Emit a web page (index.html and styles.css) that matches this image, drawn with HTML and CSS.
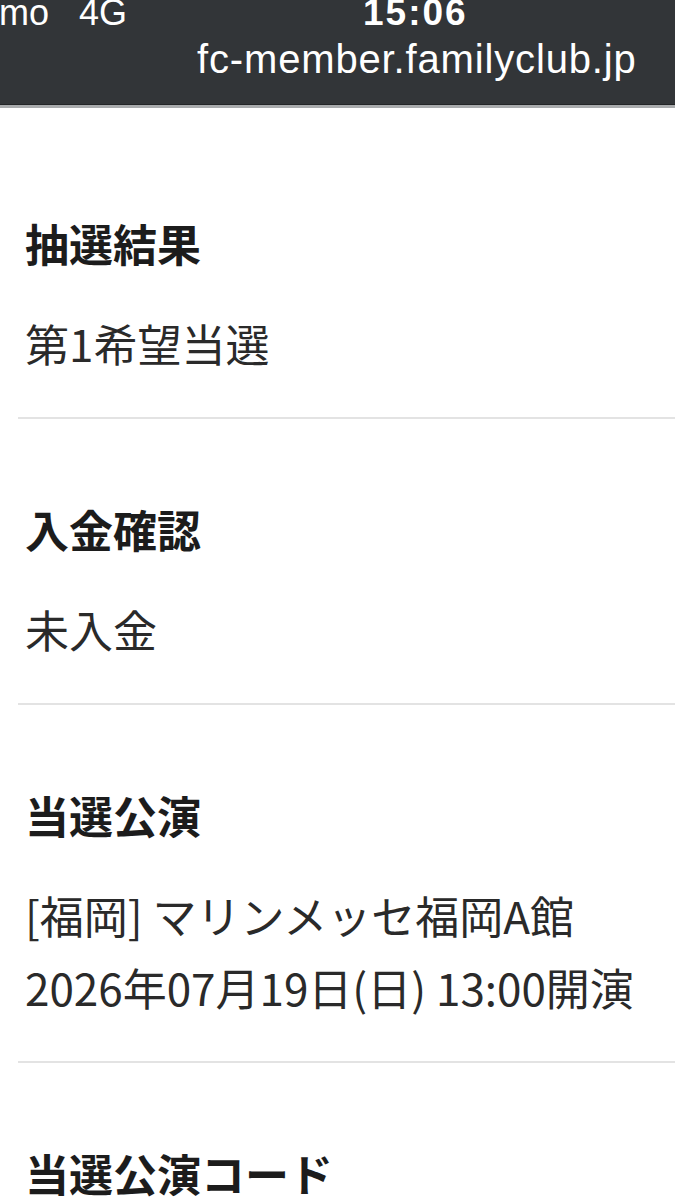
FILE: index.html
```html
<!DOCTYPE html>
<html lang="ja">
<head>
<meta charset="utf-8">
<title>fc-member.familyclub.jp</title>
<link rel="stylesheet" href="styles.css">
</head>
<body>
<header class="statusbar">
  <div class="status-row">
    <span class="carrier">mo</span>
    <span class="network">4G</span>
    <span class="time">15:06</span>
  </div>
  <div class="url-row">fc-member.familyclub.jp</div>
</header>
<main class="content">
  <section class="item">
    <h2 class="label">抽選結果</h2>
    <div class="value">
      <p>第1希望当選</p>
    </div>
  </section>
  <section class="item">
    <h2 class="label">入金確認</h2>
    <div class="value">
      <p>未入金</p>
    </div>
  </section>
  <section class="item">
    <h2 class="label">当選公演</h2>
    <div class="value">
      <p>[福岡] マリンメッセ福岡A館</p>
      <p>2026年07月19日(日) 13:00開演</p>
    </div>
  </section>
  <section class="item">
    <h2 class="label">当選公演コード</h2>
  </section>
</main>
</body>
</html>
```

FILE: styles.css
```css
html, body {
  margin: 0;
  padding: 0;
  background: #ffffff;
}

body {
  width: 675px;
  height: 1200px;
  overflow: hidden;
  font-family: "Noto Sans CJK JP", "Noto Sans", sans-serif;
}

.statusbar {
  box-sizing: border-box;
  height: 108px;
  background: #323538;
  color: #ffffff;
  font-family: "Liberation Sans", Arial, sans-serif;
  border-bottom: 3px solid #a9abad;
  box-shadow: inset 0 -1px 0 #232527;
  overflow: hidden;
}

.status-row {
  display: flex;
  align-items: baseline;
  height: 36px;
  margin-top: -5px;
  font-size: 36px;
  line-height: 36px;
}

.carrier {
  margin-left: -1px;
}

.network {
  margin-left: 30px;
}

.time {
  margin-left: 236px;
  font-weight: 700;
  font-size: 37px;
  letter-spacing: 2px;
}

.url-row {
  margin-top: 8px;
  padding-left: 197px;
  font-size: 40px;
  line-height: 40px;
  letter-spacing: 0.85px;
}

.content {
  padding: 26px 0 0 18px;
}

.item {
  padding: 74px 0 38px 7px;
  border-bottom: 2px solid #e3e3e3;
}

.item:first-child {
  padding-top: 73px;
}

.label {
  margin: 0;
  font-size: 44px;
  line-height: 72px;
  font-weight: 700;
  color: #1c1c1c;
}

.value {
  margin-top: 28px;
}

.value p {
  margin: 0;
  font-size: 44px;
  line-height: 72px;
  font-weight: 400;
  color: #2a2a2a;
}
```
